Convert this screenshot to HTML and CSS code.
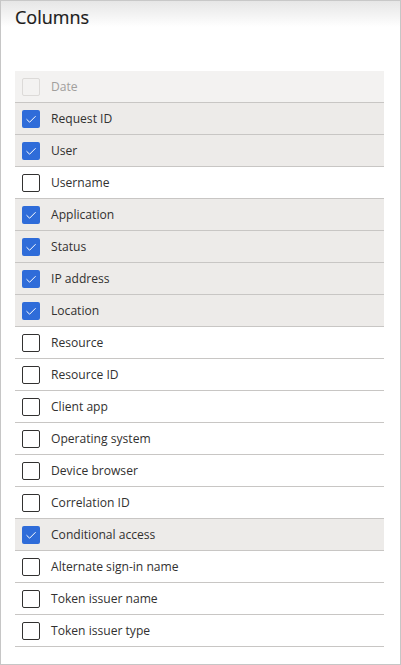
FILE: index.html
```html
<!DOCTYPE html>
<html>
<head>
<meta charset="utf-8">
<link rel="stylesheet" href="styles.css">
</head>
<body>
<div class="panel">
  <h1 class="title">Columns</h1>
  <ul class="list">
    <li class="row header"><span class="box disabled"></span><span class="label">Date</span></li>
    <li class="row on"><span class="box checked"><svg viewBox="0 0 18 18"><path d="M4.5 9.2 L7.6 12.2 L13.6 6.2"/></svg></span><span class="label">Request ID</span></li>
    <li class="row on"><span class="box checked"><svg viewBox="0 0 18 18"><path d="M4.5 9.2 L7.6 12.2 L13.6 6.2"/></svg></span><span class="label">User</span></li>
    <li class="row"><span class="box"></span><span class="label">Username</span></li>
    <li class="row on"><span class="box checked"><svg viewBox="0 0 18 18"><path d="M4.5 9.2 L7.6 12.2 L13.6 6.2"/></svg></span><span class="label">Application</span></li>
    <li class="row on"><span class="box checked"><svg viewBox="0 0 18 18"><path d="M4.5 9.2 L7.6 12.2 L13.6 6.2"/></svg></span><span class="label">Status</span></li>
    <li class="row on"><span class="box checked"><svg viewBox="0 0 18 18"><path d="M4.5 9.2 L7.6 12.2 L13.6 6.2"/></svg></span><span class="label">IP address</span></li>
    <li class="row on"><span class="box checked"><svg viewBox="0 0 18 18"><path d="M4.5 9.2 L7.6 12.2 L13.6 6.2"/></svg></span><span class="label">Location</span></li>
    <li class="row"><span class="box"></span><span class="label">Resource</span></li>
    <li class="row"><span class="box"></span><span class="label">Resource ID</span></li>
    <li class="row"><span class="box"></span><span class="label">Client app</span></li>
    <li class="row"><span class="box"></span><span class="label">Operating system</span></li>
    <li class="row"><span class="box"></span><span class="label">Device browser</span></li>
    <li class="row"><span class="box"></span><span class="label">Correlation ID</span></li>
    <li class="row on"><span class="box checked"><svg viewBox="0 0 18 18"><path d="M4.5 9.2 L7.6 12.2 L13.6 6.2"/></svg></span><span class="label">Conditional access</span></li>
    <li class="row"><span class="box"></span><span class="label">Alternate sign-in name</span></li>
    <li class="row"><span class="box"></span><span class="label">Token issuer name</span></li>
    <li class="row"><span class="box"></span><span class="label">Token issuer type</span></li>
  </ul>
</div>
</body>
</html>
```
FILE: styles.css
```css
html, body {
  margin: 0;
  padding: 0;
  background: #ffffff;
}
.panel {
  box-sizing: border-box;
  width: 401px;
  height: 665px;
  border: 1px solid #c6c6c6;
  border-top: 1px solid #c8c8c8;
  background: linear-gradient(to bottom, #e6e6e6 0px, #ffffff 26px);
  padding: 0 16px 0 14px;
  font-family: "Open Sans", "Noto Sans", sans-serif;
  color: #323130;
}
.title {
  margin: 0;
  padding-top: 3px;
  height: 70px;
  box-sizing: border-box;
  font-size: 18px;
  font-weight: 400;
  line-height: 26px;
  color: #1b1a19;
  -webkit-text-stroke: 0.2px #1b1a19;
}
.list {
  list-style: none;
  margin: 0;
  padding: 0;
}
.row {
  display: flex;
  align-items: center;
  height: 31px;
  border-bottom: 1px solid #c8c6c4;
  padding-left: 7px;
  background: #ffffff;
}
.row.on {
  background: #edebe9;
}
.row.header {
  background: #f3f2f1;
}
.box {
  box-sizing: border-box;
  width: 18px;
  height: 18px;
  border: 1px solid #323130;
  border-radius: 2px;
  margin-right: 11px;
  display: flex;
  flex: none;
}
.box.disabled {
  border-color: #dcdad8;
  background: #f3f2f1;
}
.box.checked {
  border: none;
  background: #2f6cd9;
}
.box svg {
  width: 18px;
  height: 18px;
}
.box svg path {
  fill: none;
  stroke: #ffffff;
  stroke-width: 1;
}
.label {
  font-size: 12.1px;
  line-height: 16px;
}
.header .label {
  color: #a19f9d;
}
```
